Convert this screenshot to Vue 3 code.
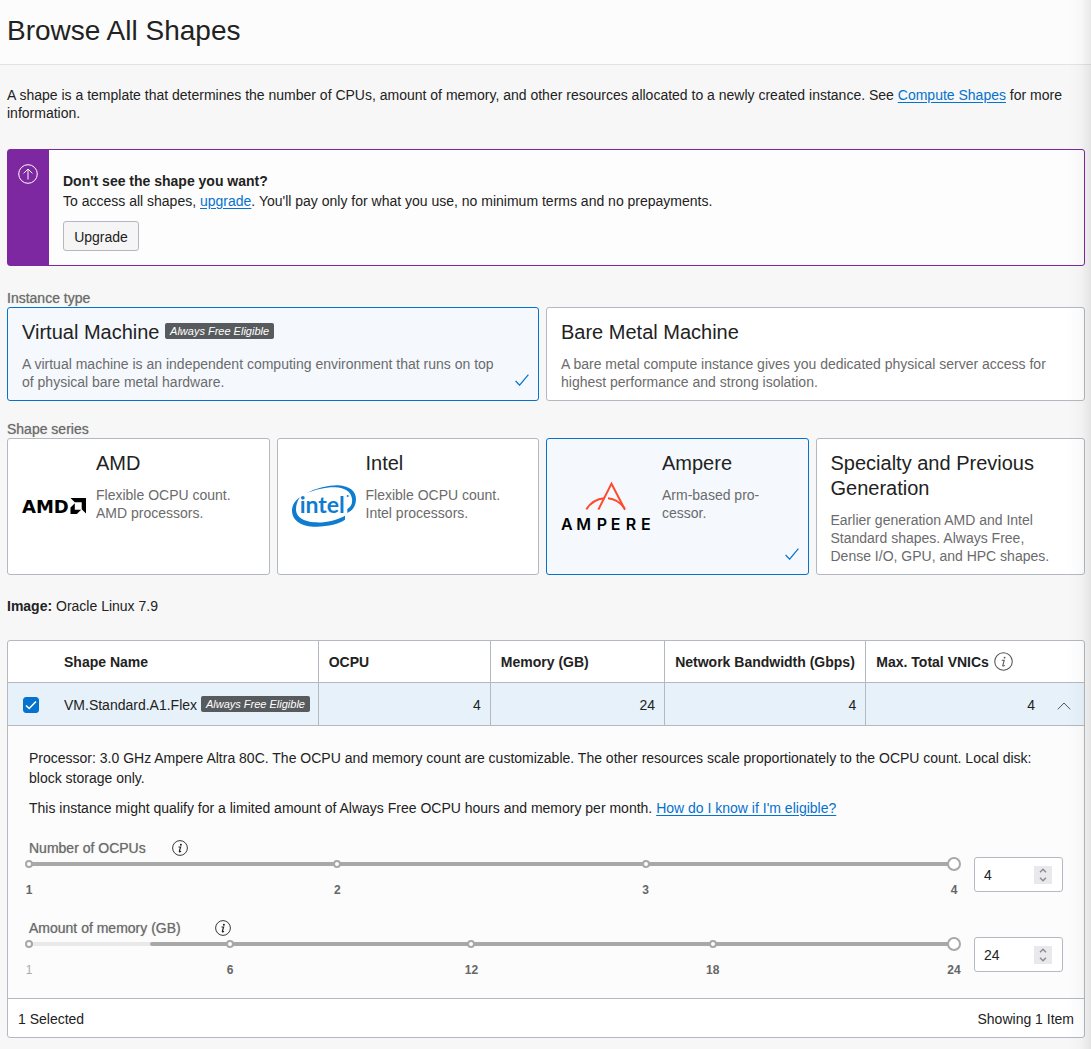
<script setup>
import { ref } from 'vue'

const instanceTypes = [
  {
    id: 'vm',
    title: 'Virtual Machine',
    free: true,
    text: 'A virtual machine is an independent computing environment that runs on top of physical bare metal hardware.'
  },
  {
    id: 'bm',
    title: 'Bare Metal Machine',
    free: false,
    text: 'A bare metal compute instance gives you dedicated physical server access for highest performance and strong isolation.'
  }
]

const series = [
  { id: 'amd', title: 'AMD', text: 'Flexible OCPU count. AMD processors.' },
  { id: 'intel', title: 'Intel', text: 'Flexible OCPU count. Intel processors.' },
  { id: 'ampere', title: 'Ampere', text: 'Arm-based pro\u00ADcessor.' },
  {
    id: 'specialty',
    title: 'Specialty and Previous Generation',
    text: 'Earlier generation AMD and Intel Standard shapes. Always Free, Dense I/O, GPU, and HPC shapes.'
  }
]

const instanceType = ref('vm')
const shapeSeries = ref('ampere')
const selected = ref(true)

const sliders = ref([
  { id: 'ocpu', label: 'Number of OCPUs', min: 1, floor: 1, max: 4, value: 4, ticks: [1, 2, 3, 4] },
  { id: 'memory', label: 'Amount of memory (GB)', min: 1, floor: 4, max: 24, value: 24, ticks: [1, 6, 12, 18, 24] }
])

const percent = (s, v) => ((v - s.min) / (s.max - s.min)) * 100 + '%'

function step(s, by) {
  s.value = Math.min(s.max, Math.max(s.floor, Number(s.value) + by))
}
</script>

<template>
  <div class="page">
    <header class="page-header">
      <h1>Browse All Shapes</h1>
    </header>

    <main class="content">
      <p class="intro">
        A shape is a template that determines the number of CPUs, amount of memory, and other resources allocated to a
        newly created instance. See <a href="#">Compute Shapes</a> for more information.
      </p>

      <section class="notice">
        <div class="notice-bar">
          <svg width="20" height="20" viewBox="0 0 20 20" fill="none" stroke="#fff">
            <circle cx="10" cy="10" r="9.3" />
            <path d="M10 15.5V5.2M5.6 9.4L10 5L14.4 9.4" />
          </svg>
        </div>
        <div class="notice-body">
          <strong>Don't see the shape you want?</strong>
          <p>
            To access all shapes, <a href="#">upgrade</a>. You'll pay only for what you use, no minimum terms and no
            prepayments.
          </p>
          <button type="button" class="upgrade">Upgrade</button>
        </div>
      </section>

      <fieldset class="group types">
        <legend class="field-label">Instance type</legend>
        <div class="cards two">
          <label v-for="t in instanceTypes" :key="t.id" class="card" :class="{ active: instanceType === t.id }">
            <input v-model="instanceType" class="card-radio" type="radio" name="instance-type" :value="t.id" />
            <span class="card-text">
              <span class="card-title">{{ t.title }} <em v-if="t.free" class="badge">Always Free Eligible</em></span>
              <span class="card-desc">{{ t.text }}</span>
            </span>
            <svg v-if="instanceType === t.id" class="tick" width="14" height="12" viewBox="0 0 14 12" fill="none" stroke="#0572ce" stroke-width="1.2">
              <path d="M.6 7L4.6 11.2L13.4 .6" />
            </svg>
          </label>
        </div>
      </fieldset>

      <fieldset class="group">
        <legend class="field-label">Shape series</legend>
        <div class="cards four">
          <label v-for="s in series" :key="s.id" class="card" :class="{ active: shapeSeries === s.id }">
            <input v-model="shapeSeries" class="card-radio" type="radio" name="shape-series" :value="s.id" />
            <svg v-if="s.id === 'amd'" class="logo" width="64" height="16" viewBox="0 0 64 16">
              <text x="0" y="15" font-family="DejaVu Sans" font-weight="700" font-size="18">AMD</text>
              <path d="M48.500 0H64V15.600L59.700 11.300V4.300H52.800ZM52.800 5.300L48.500 9.600V16H54.900L59.200 11.700H52.800Z" />
            </svg>
            <svg v-else-if="s.id === 'intel'" class="logo" width="64" height="42" viewBox="876 180 192 126" fill="#0f7dcf">
              <path d="M918 205C950 188 990 180 1015 181C1050 183 1068 200 1068 222C1068 245 1055 258 1042 264V252C1052 246 1058 236 1056 222C1053 200 1035 188 1005 187C980 186 945 194 918 205Z" />
              <path d="M900 217C884 228 876 242 876 257C877 290 910 306 950 305C985 304 1018 296 1035 284V272C1010 286 975 294 945 292C910 290 889 275 888 255C888 240 892 228 900 217Z" />
              <circle cx="1043" cy="213" r="3" />
              <text x="899" y="263" font-family="Lato" font-weight="700" font-size="69">intel</text>
            </svg>
            <svg v-else-if="s.id === 'ampere'" class="logo" width="91" height="49" viewBox="603 171 273 147">
              <g fill="none" stroke="#ff4a2d" stroke-width="6">
                <path d="M715 254L754.500 176L795 254" />
                <path d="M679 253C690 236 710 222 733 220M744 220C765 222 782 234 794 250" />
              </g>
              <text x="603 649 710 752 797 843" y="315" font-family="Inter" font-weight="600" font-size="48">AMPERE</text>
            </svg>
            <span class="card-text">
              <span class="card-title">{{ s.title }}</span>
              <span class="card-desc">{{ s.text }}</span>
            </span>
            <svg v-if="shapeSeries === s.id" class="tick" width="14" height="12" viewBox="0 0 14 12" fill="none" stroke="#0572ce" stroke-width="1.2">
              <path d="M.6 7L4.6 11.2L13.4 .6" />
            </svg>
          </label>
        </div>
      </fieldset>

      <p class="image"><strong>Image:</strong> Oracle Linux 7.9</p>

      <section class="shapes">
        <table>
          <colgroup>
            <col class="c-check" />
            <col class="c-name" />
            <col class="c-ocpu" />
            <col class="c-mem" />
            <col class="c-net" />
            <col />
            <col class="c-expand" />
          </colgroup>
          <thead>
            <tr>
              <th class="check"></th>
              <th class="line">Shape Name</th>
              <th class="line">OCPU</th>
              <th class="line">Memory (GB)</th>
              <th class="line">Network Bandwidth (Gbps)</th>
              <th colspan="2">
                <span class="th-info">
                  Max. Total VNICs
                  <svg width="19" height="19" viewBox="0 0 16 16" fill="none" stroke="#555">
                    <circle cx="8" cy="8" r="7.4" stroke-width=".9" />
                    <path d="M6.500 7H8.600L7.400 11.200Q7.300 12 8 11.800L9 11.200" stroke-width=".9" />
                    <circle cx="8.900" cy="4.700" r=".8" fill="#555" stroke="none" />
                  </svg>
                </span>
              </th>
            </tr>
          </thead>
          <tbody>
            <tr class="row">
              <td class="check"><input v-model="selected" type="checkbox" aria-label="VM.Standard.A1.Flex" /></td>
              <td class="line name">VM.Standard.A1.Flex <em class="badge">Always Free Eligible</em></td>
              <td class="line num">4</td>
              <td class="line num">24</td>
              <td class="line num">4</td>
              <td class="num">4</td>
              <td class="expand">
                <button type="button" aria-label="Collapse">
                  <svg width="14" height="8" viewBox="0 0 14 8" fill="none" stroke="#555"><path d="M.8 7.300L7 1L13.200 7.300" /></svg>
                </button>
              </td>
            </tr>
            <tr>
              <td colspan="7" class="details">
                <p>
                  Processor: 3.0 GHz Ampere Altra 80C. The OCPU and memory count are customizable. The other resources
                  scale proportionately to the OCPU count. Local disk: block storage only.
                </p>
                <p>
                  This instance might qualify for a limited amount of Always Free OCPU hours and memory per month.
                  <a href="#">How do I know if I'm eligible?</a>
                </p>

                <div v-for="s in sliders" :key="s.id" class="setting">
                  <div class="slider">
                    <div class="slider-label" :class="s.id">
                      <label class="field-label" :for="s.id">{{ s.label }}</label>
                      <svg width="16" height="16" viewBox="0 0 16 16" fill="none" stroke="#222">
                        <circle cx="8" cy="8" r="7.4" stroke-width=".9" />
                        <path d="M6.500 7H8.600L7.400 11.200Q7.300 12 8 11.800L9 11.200" stroke-width="1.200" />
                        <circle cx="8.900" cy="4.700" r="1" fill="#222" stroke="none" />
                      </svg>
                    </div>
                    <div class="rail">
                      <span class="rail-fill" :style="{ left: percent(s, s.floor) }"></span>
                      <span v-for="t in s.ticks" :key="t" class="stop" :style="{ left: percent(s, t) }"></span>
                      <input :id="s.id" v-model="s.value" type="range" :min="s.min" :max="s.max" />
                    </div>
                    <div class="marks">
                      <span v-for="t in s.ticks" :key="t" class="mark" :class="{ off: t < s.floor }" :style="{ left: percent(s, t) }">{{ t }}</span>
                    </div>
                  </div>
                  <div class="stepper">
                    <input v-model="s.value" type="number" :min="s.floor" :max="s.max" :aria-label="s.label" />
                    <span class="arrows">
                      <button type="button" aria-label="Increase" @click="step(s, 1)">
                        <svg width="8" height="5" viewBox="0 0 8 5" fill="none" stroke="#8a8a94" stroke-width="1.400"><path d="M1 4.300L4 1.200L7 4.300" /></svg>
                      </button>
                      <button type="button" aria-label="Decrease" @click="step(s, -1)">
                        <svg width="8" height="5" viewBox="0 0 8 5" fill="none" stroke="#8a8a94" stroke-width="1.400"><path d="M1 .7L4 3.800L7 .7" /></svg>
                      </button>
                    </span>
                  </div>
                </div>
              </td>
            </tr>
          </tbody>
        </table>
        <footer class="table-footer">
          <span>1 Selected</span>
          <span>Showing 1 Item</span>
        </footer>
      </section>
    </main>
    <div class="edge-shade"></div>
  </div>
</template>

<style>
body {
  background: #f7f7f7;
}
</style>

<style scoped>
.page {
  min-height: 100vh;
  box-sizing: border-box;
  position: relative;
  font: 14px/18px "Liberation Sans", Arial, sans-serif;
  color: #222;
  background: #f7f7f7;
}
.page * {
  box-sizing: border-box;
}
.page button,
.page input {
  font: inherit;
  color: inherit;
}
.edge-shade {
  position: absolute;
  top: 0;
  right: 0;
  bottom: 0;
  width: 24px;
  pointer-events: none;
  background: linear-gradient(to right, rgba(0, 0, 0, 0), rgba(0, 0, 0, 0.02) 60%, rgba(0, 0, 0, 0.08));
}
.page-header {
  background: #fcfcfc;
  border-bottom: 1px solid #e3e3e3;
  padding: 15px 7px 17px;
}
h1 {
  margin: 0;
  font-size: 28px;
  line-height: 32px;
  font-weight: 400;
}
p {
  margin: 0;
}
a {
  color: #0572ce;
  text-decoration: underline;
  text-underline-offset: 2px;
}
.content {
  padding: 21px 6px 11px 7px;
}
.notice {
  display: flex;
  margin-top: 27px;
  border: 1px solid #7d28a0;
  border-radius: 3px;
  background: #fdfdfd;
}
.notice-bar {
  flex: none;
  width: 41px;
  padding: 14px 10px;
  background: #7d28a0;
}
.notice-bar svg {
  display: block;
}
.notice-body {
  padding: 21px 14px 14px;
  line-height: 20px;
}
.upgrade {
  display: block;
  width: 76px;
  height: 30px;
  margin-top: 10px;
  padding: 2px 0 0;
  border: 1px solid #b4b8c1;
  border-radius: 3px;
  background: #f5f5f5;
}
.group {
  min-width: 0;
  margin: 19px 0 0;
  padding: 0;
  border: 0;
}
.types {
  margin-top: 23px;
}
.field-label {
  padding: 0;
  color: #6b6b6b;
  text-shadow: 0 0 1px #a0a0a0;
}
legend {
  display: block;
}
.cards {
  display: grid;
}
.two {
  grid-template-columns: 1fr 1fr;
}
.four {
  grid-template-columns: repeat(4, 1fr);
}
.card {
  position: relative;
  display: flex;
  gap: 10px;
  margin-right: 7px;
  padding: 12px 32px 9px 14px;
  border: 1px solid #b4b8c1;
  border-radius: 3px;
  background: #fff;
}
.card:last-child {
  margin-right: 0;
}
.card.active {
  border-color: #0572ce;
  background: #f5f9fe;
}
.card-radio {
  position: absolute;
  inset: 0;
  width: 100%;
  height: 100%;
  margin: 0;
  opacity: 0;
}
.logo {
  flex: none;
  align-self: center;
  margin-bottom: 4px;
  overflow: visible;
}
.card-title {
  display: block;
  font-size: 20px;
  line-height: 25px;
}
.card-desc {
  display: block;
  margin-top: 10px;
  color: #6b6b6b;
}
.badge {
  display: inline-block;
  padding: 0 5px;
  border-radius: 2px;
  font-size: 11px;
  line-height: 16px;
  vertical-align: 2px;
  color: #fff;
  background: #585b5d;
}
.card-title .badge {
  vertical-align: 4px;
}
.tick {
  position: absolute;
  right: 9px;
  bottom: 14px;
}
.image {
  margin-top: 22px;
}
.shapes {
  margin-top: 25px;
  border: 1px solid #b4b8c1;
  border-radius: 3px;
  background: #fff;
}
table {
  width: 100%;
  table-layout: fixed;
  border-collapse: separate;
  border-spacing: 0;
}
.c-check {
  width: 46px;
}
.c-name {
  width: 24.6%;
}
.c-ocpu {
  width: 16%;
}
.c-mem {
  width: 16.2%;
}
.c-net {
  width: 18.7%;
}
.c-expand {
  width: 40px;
}
th,
td {
  padding: 0 10px;
  text-align: left;
  white-space: nowrap;
  border-bottom: 1px solid #b4b8c1;
}
th {
  height: 42px;
}
.row td {
  height: 43px;
  padding-top: 2px;
  background: #e6f1fa;
}
.line {
  border-right: 1px solid #b4b8c1;
}
.name {
  padding-right: 0;
}
.row .num {
  text-align: right;
  padding-right: 9px;
}
.th-info {
  display: flex;
  align-items: center;
  gap: 5px;
}
.check {
  padding: 0 15px;
}
.check input {
  display: block;
  appearance: none;
  width: 16px;
  height: 16px;
  margin: 0;
  border: 1px solid #0572ce;
  border-radius: 3px;
  background: #fff;
}
.check input:checked {
  background: #0572ce url("data:image/svg+xml,%3Csvg xmlns='http://www.w3.org/2000/svg' viewBox='0 0 14 14'%3E%3Cpath d='M2 7.500L5.200 10.500L12 3.500' fill='none' stroke='%23fff' stroke-width='1.600'/%3E%3C/svg%3E");
}
.expand button {
  display: block;
  width: 20px;
  height: 20px;
  padding: 0;
  border: 0;
  background: none;
}
.details {
  padding: 22px 21px 19px;
  line-height: 20px;
  white-space: normal;
  background: #fcfcfc;
}
.details p + p {
  margin-top: 10px;
}
.setting {
  display: flex;
  gap: 20px;
  margin-top: 21px;
}
.setting + .setting {
  margin-top: 20px;
}
.slider {
  flex: 1;
  line-height: 18px;
}
.slider-label {
  display: flex;
  align-items: center;
  gap: 26px;
}
.slider-label.memory {
  gap: 34px;
}
.rail {
  position: relative;
  height: 14px;
  background: linear-gradient(#e9e9e9, #e9e9e9) center / 100% 4px no-repeat;
}
.rail-fill {
  position: absolute;
  top: 5px;
  right: 0;
  height: 4px;
  border-radius: 2px;
  background: #a8a8a8;
}
.stop {
  position: absolute;
  top: 3px;
  width: 8px;
  height: 8px;
  margin-left: -4px;
  border: 2px solid #a8a8a8;
  border-radius: 50%;
  background: #fff;
}
.rail input {
  position: absolute;
  top: 0;
  left: -7px;
  width: calc(100% + 14px);
  height: 14px;
  margin: 0;
  appearance: none;
  background: transparent;
}
.rail input::-webkit-slider-thumb {
  appearance: none;
  width: 14px;
  height: 14px;
  border: 2px solid #a8a8a8;
  border-radius: 50%;
  background: #fff;
}
.marks {
  position: relative;
  height: 18px;
  margin-top: 10px;
  font-size: 12px;
  font-weight: 700;
  color: #666;
}
.mark {
  position: absolute;
  width: 20px;
  margin-left: -10px;
  text-align: center;
}
.mark.off {
  font-weight: 400;
  color: #aaa;
}
.stepper {
  flex: none;
  display: flex;
  align-items: center;
  width: 89px;
  height: 35px;
  margin-top: 18px;
  padding: 0 10px 0 9px;
  border: 1px solid #b4b8c1;
  border-radius: 3px;
  background: #fff;
}
.stepper input {
  flex: 1;
  min-width: 0;
  padding: 0;
  border: 0;
  outline: 0;
  background: none;
  appearance: textfield;
}
.stepper input::-webkit-inner-spin-button {
  appearance: none;
  margin: 0;
}
.arrows {
  display: grid;
  width: 18px;
  height: 18px;
  background: #e9e9ed;
}
.arrows button {
  display: grid;
  place-items: center;
  height: 9px;
  padding: 0;
  border: 0;
  background: none;
}
.table-footer {
  display: flex;
  justify-content: space-between;
  padding: 11px 10px 9px;
}
</style>
